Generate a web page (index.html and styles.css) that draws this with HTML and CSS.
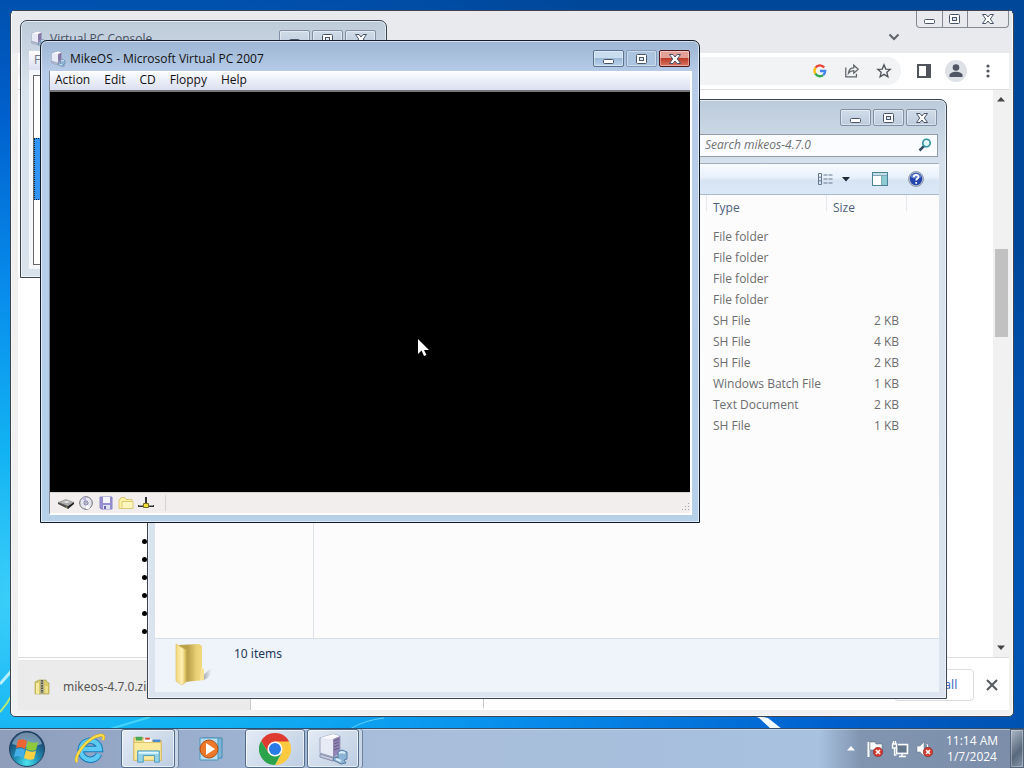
FILE: index.html
```
<!DOCTYPE html>
<html lang="en">
<head>
  <meta charset="UTF-8">
  <title>Desktop</title>
  <link rel="stylesheet" href="styles.css">
</head>
<body>

  <svg class="defs" aria-hidden="true">
    <symbol id="g-min" viewBox="0 0 16 14">
      <rect x="2.500" y="7.500" width="10" height="4" rx="1" fill="#fff" stroke="#4a5468"/>
    </symbol>
    <symbol id="g-max" viewBox="0 0 16 14">
      <rect x="2.500" y="2.500" width="10" height="9" rx="1" fill="#fff" stroke="#4a5468"/>
      <rect x="5.500" y="5.500" width="4" height="3" fill="#dfe8f2" stroke="#4a5468"/>
    </symbol>
    <symbol id="g-close" viewBox="0 0 16 14">
      <path d="M2.500 2.500h3.500L8 5l2-2.500h3.500L10.300 7l3.200 4.500H10L8 9l-2 2.500H2.500L5.700 7z" fill="#fff" stroke="#4a5468"/>
    </symbol>
    <symbol id="vpc" viewBox="0 0 32 32">
      <path d="M3 5l13-4 7 2v17l-7 4-13-4z" fill="#e8eaf5" stroke="#9ba3bd"/>
      <path d="M16 5l7-2v17l-7 4z" fill="#9186b5"/>
      <path d="M3 5l13-4 7 2-7 3z" fill="#fafaff"/>
      <path d="M17 8l5-2M17 11l5-2M17 14l5-2M17 17l5-2" stroke="#625882"/>
      <path d="M3 21l13 4 5-2v3l-5 2-13-4z" fill="#c5cbdc" stroke="#858eaa"/>
      <path d="M21 19l4-2 5 2v7l-3 1 2 3-5 1-8-4 1-3 4 1z" fill="#8db3d4" stroke="#587c9f"/>
      <path d="M22 20l3-1 3 1M19 26l5 2" fill="none" stroke="#d9edfb" stroke-width="2"/>
    </symbol>
    <symbol id="error" viewBox="0 0 10 10">
      <circle cx="5" cy="5" r="4.700" fill="#d63a32" stroke="#8d2522" stroke-width=".6"/>
      <path d="M3 3l4 4M7 3L3 7" stroke="#fff" stroke-width="1.600"/>
    </symbol>
  </svg>

  <main class="desktop">
    <svg class="streaks" viewBox="0 0 1024 728" preserveAspectRatio="none" aria-hidden="true">
      <path d="M0 684Q7 676 14 668" stroke="#b8efff" stroke-width="3" fill="none"/>
      <path d="M0 712Q7 704 12 695" stroke="#b2e878" stroke-width="2" fill="none"/>
      <path d="M750 714l9 4 12 11h11l-14-11z" fill="#f4fbff"/>
      <path d="M350 729q15-9 34-11" stroke="#5fd0ff" stroke-width="1" fill="none"/>
      <path d="M110 729l40-12" stroke="#44d3fa" stroke-width="2" fill="none"/>
    </svg>

    <!-- browser -->
    <section class="window browser">
      <header class="tabstrip">
        <div class="joined-controls">
          <button aria-label="Minimize"><svg><use href="#g-min"/></svg></button>
          <button aria-label="Maximize"><svg><use href="#g-max"/></svg></button>
          <button class="wide" aria-label="Close"><svg><use href="#g-close"/></svg></button>
        </div>
        <button class="tab-search" aria-label="Search tabs"><svg viewBox="0 0 12 8"><path d="M1.500 1.500L6 6l4.500-4.500" fill="none" stroke="#5f6368" stroke-width="2"/></svg></button>
      </header>
      <div class="browser-body">
        <div class="browser-toolbar">
          <div class="omnibox">
            <button aria-label="Google search">
              <svg viewBox="0 0 18 18" fill="none" stroke-width="2.600">
                <path d="M13.700 5A6 6 0 0 0 4 5.300" stroke="#ea4335"/>
                <path d="M4 5.300A6 6 0 0 0 3.800 12" stroke="#fbbc05"/>
                <path d="M3.800 12A6 6 0 0 0 12.600 13.600" stroke="#34a853"/>
                <path d="M12.600 13.600A6 6 0 0 0 14.800 9H9" stroke="#4285f4"/>
              </svg>
            </button>
            <button aria-label="Share">
              <svg viewBox="0 0 18 18" fill="none" stroke="#5f6368" stroke-width="1.400"><path d="M2 5v10.500h12V12M5 11.500c.5-4 3-6 6-6V2.500L16 7l-5 4.500v-3c-3 0-4.500 1-6 3z"/></svg>
            </button>
            <button aria-label="Bookmark">
              <svg viewBox="0 0 18 18" fill="none" stroke="#50545a" stroke-width="1.500"><path d="M9 2l2 4.800 5 .4-3.800 3.300 1.200 5L9 12.800l-4.400 2.700 1.200-5L2 7.200l5-.4z"/></svg>
            </button>
          </div>
          <button aria-label="Side panel"><svg viewBox="0 0 18 18"><rect x="3" y="3" width="12" height="12" fill="#fff" stroke="#50545a" stroke-width="2"/><path d="M11 3h4v12h-4z" fill="#50545a"/></svg></button>
          <button class="avatar" aria-label="Profile"><svg viewBox="0 0 18 18" fill="#4f5563"><circle cx="9" cy="5.500" r="3.300"/><path d="M2.500 15v-2c0-2 3.500-3.300 6.500-3.300s6.500 1.300 6.500 3.300v2z"/></svg></button>
          <button aria-label="Menu"><svg viewBox="0 0 18 18" fill="#50545a"><circle cx="9" cy="4" r="1.600"/><circle cx="9" cy="9" r="1.600"/><circle cx="9" cy="14" r="1.600"/></svg></button>
        </div>
        <div class="page">
          <ul class="page-list">
            <li></li>
            <li></li>
            <li></li>
            <li></li>
            <li></li>
            <li></li>
          </ul>
          <div class="scrollbar">
            <svg viewBox="0 0 8 5"><path d="M4 0l4 4.500H0z" fill="#444"/></svg>
            <div class="track"><div class="thumb"></div></div>
            <svg viewBox="0 0 8 5"><path d="M4 5L0 .5h8z" fill="#444"/></svg>
          </div>
        </div>
        <footer class="downloads">
          <a class="download" href="#">
            <svg viewBox="0 0 16 16">
              <path d="M1 3l4-2h7l1 2 2 1v11H1z" fill="#d9ca69" stroke="#a5973f" stroke-width=".6"/>
              <path d="M2 4h3v11H2z" fill="#f3e99f"/>
              <path d="M6 1h4v14H6z" fill="#b5b08a"/>
              <path d="M8 1v13" stroke="#55584a" stroke-width="2" stroke-dasharray="1.500 1"/>
              <path d="M11 7h3v7h-3z" fill="#eadf8a"/>
            </svg>
            <span>mikeos-4.7.0.zip</span>
          </a>
          <div class="download-gap"></div>
          <button class="show-all">Show all</button>
          <button class="close-bar" aria-label="Close"><svg viewBox="0 0 12 12"><path d="M1 1l10 10M11 1L1 11" stroke="#55595e" stroke-width="2"/></svg></button>
        </footer>
      </div>
    </section>

    <!-- file explorer -->
    <section class="window explorer">
      <header class="titlebar">
        <div class="controls">
          <button aria-label="Minimize"><svg><use href="#g-min"/></svg></button>
          <button aria-label="Maximize"><svg><use href="#g-max"/></svg></button>
          <button aria-label="Close"><svg><use href="#g-close"/></svg></button>
        </div>
      </header>
      <div class="address-row">
        <label class="search">
          <input type="text" placeholder="Search mikeos-4.7.0" aria-label="Search mikeos-4.7.0">
          <svg viewBox="0 0 14 14"><path d="M6 8l-4.500 4.500" stroke="#355064" stroke-width="2.500"/><circle cx="8.500" cy="5" r="3.700" fill="#dff7fb" stroke="#2b91a0" stroke-width="1.600"/></svg>
        </label>
      </div>
      <div class="client">
        <div class="command-bar">
          <button class="view" aria-label="Change your view">
            <svg viewBox="0 0 16 14" fill="none" stroke="#68788c"><path d="M1.500 1.500h3v11h-3zM1 5.200h4M1 8.800h4"/><path d="M6.500 3h4M11.500 3h4M6.500 7h4M11.500 7h4M6.500 11h4M11.500 11h4"/></svg>
          </button>
          <button class="more" aria-label="More options"><svg viewBox="0 0 8 5"><path d="M0 0h8L4 4.500z" fill="#1d2a3d"/></svg></button>
          <button class="preview" aria-label="Show the preview pane">
            <svg viewBox="0 0 16 14"><rect x=".5" y=".5" width="15" height="13" fill="#fff" stroke="#4d8198"/><path d="M1 1h14v2H1z" fill="#c3dde6"/><path d="M10 4h5v9h-5z" fill="#8ccbd2"/><path d="M1 3.500h14M9.500 3v10" stroke="#7fa9b8"/></svg>
          </button>
          <button class="help" aria-label="Get help">
            <svg viewBox="0 0 16 16"><circle cx="8" cy="8" r="7.500" fill="#b3bccc" stroke="#7d8799" stroke-width=".7"/><circle cx="8" cy="8" r="6.200" fill="#2545ac"/><path d="M2.500 6a6 6 0 0 1 11 0Q8 9 2.500 6z" fill="#6683cf"/><path d="M5.700 6.200c0-3 4.800-3 4.800-.3C10.500 7.600 8.200 7.500 8.200 9.500M8.200 11v1.700" fill="none" stroke="#fff" stroke-width="1.700"/></svg>
          </button>
        </div>
        <div class="panes">
          <nav class="nav-pane"></nav>
          <div class="file-pane">
            <table class="files">
              <colgroup><col><col class="type"><col class="size"><col class="rest"></colgroup>
              <thead>
                <tr><th></th><th>Type</th><th>Size</th><th></th></tr>
              </thead>
              <tbody>
                <tr><td></td><td>File folder</td><td></td><td></td></tr>
                <tr><td></td><td>File folder</td><td></td><td></td></tr>
                <tr><td></td><td>File folder</td><td></td><td></td></tr>
                <tr><td></td><td>File folder</td><td></td><td></td></tr>
                <tr><td></td><td>SH File</td><td>2 KB</td><td></td></tr>
                <tr><td></td><td>SH File</td><td>4 KB</td><td></td></tr>
                <tr><td></td><td>SH File</td><td>2 KB</td><td></td></tr>
                <tr><td></td><td>Windows Batch File</td><td>1 KB</td><td></td></tr>
                <tr><td></td><td>Text Document</td><td>2 KB</td><td></td></tr>
                <tr><td></td><td>SH File</td><td>1 KB</td><td></td></tr>
              </tbody>
            </table>
          </div>
        </div>
        <footer class="details">
          <svg viewBox="0 0 40 44">
            <defs>
              <linearGradient id="fold"><stop offset="0" stop-color="#bba44a"/><stop offset=".35" stop-color="#b9a04a"/><stop offset=".7" stop-color="#ead077"/><stop offset="1" stop-color="#f3dc83"/></linearGradient>
              <linearGradient id="flap"><stop offset="0" stop-color="#f0d77d"/><stop offset=".6" stop-color="#fff0b4"/><stop offset="1" stop-color="#d6b94f"/></linearGradient>
              <linearGradient id="shade"><stop offset="0" stop-color="#747b85"/><stop offset="1" stop-color="#eff3f8"/></linearGradient>
            </defs>
            <path d="M25 38l13-12q2 8-7 12z" fill="url(#shade)"/>
            <path d="M6 3l20-1 3 2v22l2 2v10L12 40z" fill="url(#fold)"/>
            <path d="M3 2l10 6v32l-4 3-6-4z" fill="url(#flap)" stroke="#d8bd5b" stroke-width=".6"/>
            <path d="M28 25l3 4v9h-4z" fill="#f6e294"/>
          </svg>
          <span>10 items</span>
        </footer>
      </div>
    </section>

    <!-- virtual pc console -->
    <section class="window console">
      <header class="titlebar">
        <svg class="app-icon"><use href="#vpc"/></svg>
        <span class="title">Virtual PC Console</span>
        <div class="controls">
          <button aria-label="Minimize"><svg><use href="#g-min"/></svg></button>
          <button aria-label="Maximize"><svg><use href="#g-max"/></svg></button>
          <button aria-label="Close"><svg><use href="#g-close"/></svg></button>
        </div>
      </header>
      <div class="client">
        <nav class="menu"><button>File</button></nav>
        <div class="machines"><div class="machine"></div></div>
      </div>
    </section>

    <!-- running machine -->
    <section class="window machine-window">
      <header class="titlebar">
        <svg class="app-icon"><use href="#vpc"/></svg>
        <span class="title">MikeOS - Microsoft Virtual PC 2007</span>
        <div class="controls">
          <button aria-label="Minimize"><svg><use href="#g-min"/></svg></button>
          <button class="flat" aria-label="Maximize"><svg><use href="#g-max"/></svg></button>
          <button class="red" aria-label="Close"><svg><use href="#g-close"/></svg></button>
        </div>
      </header>
      <div class="client">
        <nav class="menu">
          <button>Action</button>
          <button>Edit</button>
          <button>CD</button>
          <button>Floppy</button>
          <button>Help</button>
        </nav>
        <div class="screen">
          <svg viewBox="0 0 12 19"><path d="M1 1v15l3.500-3.500L7 18l2.500-1-2.500-5h5z" fill="#fff"/></svg>
        </div>
        <footer class="statusbar">
          <svg viewBox="0 0 16 14"><path d="M0 6l8-3 8 3-6 4z" fill="#a9a9a9"/><path d="M0 6l10 4v3L0 8z" fill="#4b4b4b"/><path d="M10 10l6-4v2l-6 5z" fill="#222"/><path d="M4 6l5-1 3 1-3 1z" fill="#e8e8e8"/><path d="M8 11l1 .4" stroke="#a4da4d"/></svg>
          <svg viewBox="0 0 14 14"><circle cx="7" cy="7" r="6.300" fill="#e5e5ee" stroke="#6d6d78"/><path d="M7 7L3 2a6 6 0 0 1 4-1z" fill="#b9b7de"/><path d="M7 7l4 5a6 6 0 0 1-4 1z" fill="#fff"/><circle cx="7" cy="7" r="2" fill="#fff" stroke="#7772a8"/><circle cx="7" cy="7" r=".7" fill="#444"/></svg>
          <svg viewBox="0 0 14 14"><path d="M1 1h12v12H2l-1-1z" fill="#9690d2" stroke="#8a84c6"/><path d="M4 1h7v6H4z" fill="#f5f5ff"/><path d="M4 9h7v4H4z" fill="#e2e2ef"/><path d="M5 10h2v3H5z" fill="#6861a8"/></svg>
          <svg viewBox="0 0 16 14"><path d="M1 12.500v-9h1l1-2h4l1 2h6v9z" fill="#fff3a6" stroke="#dcc878"/><path d="M4 12.500v-7h11v7z" fill="#fff7bd" stroke="#dcc878"/></svg>
          <svg viewBox="0 0 16 14"><path d="M8 1v7M0 10h16" stroke="#333" stroke-width="2"/><path d="M1 9.500h14" stroke="#999"/><path d="M5.500 7.500h5v4h-5z" fill="#f0df39" stroke="#776f20"/></svg>
          <span class="divider"></span>
          <svg class="grip" viewBox="0 0 10 10" fill="#aaa2a8"><path d="M8 1h1v1H8zM5 4h1v1H5zM8 4h1v1H8zM2 7h1v1H2zM5 7h1v1H5zM8 7h1v1H8z"/></svg>
        </footer>
      </div>
    </section>
  </main>

  <footer class="taskbar">
    <button class="start" aria-label="Start">
      <svg viewBox="0 0 38 38">
        <defs>
          <radialGradient id="orb" cx=".5" cy=".9" r=".8"><stop offset="0" stop-color="#4ce5ee"/><stop offset=".4" stop-color="#2294b9"/><stop offset="1" stop-color="#173c67"/></radialGradient>
        </defs>
        <circle cx="19" cy="19" r="17.500" fill="url(#orb)" stroke="#24415f"/>
        <path d="M4 14a15.500 15.500 0 0 1 30 0q-14 6-30 0z" fill="#c9dbe8" opacity=".5"/>
        <path d="M10 10q5-2 9 1l-2 8q-4-3-9-1z" fill="#ed6530"/>
        <path d="M20 11q5 3 10 1l-2 8q-5 2-10-1z" fill="#8fc83b"/>
        <path d="M8 19q5-2 9 1l-2 8q-4-3-9-1z" fill="#43aee8"/>
        <path d="M18 20q5 3 10 1l-2 8q-5 2-10-1z" fill="#fdd043"/>
      </svg>
    </button>
    <button class="task ie" aria-label="Internet Explorer">
      <svg viewBox="0 0 32 32" fill="none">
        <path d="M25 21A9.500 9.500 0 1 1 25.700 16H9" stroke="#1879b9" stroke-width="6.500"/>
        <path d="M25 21A9.500 9.500 0 1 1 25.700 16H9" stroke="#5ccaf2" stroke-width="4.500"/>
        <path d="M3 29C-1 24 13 4 27 2q4 0 2 5" stroke="#d7a51c" stroke-width="3"/>
        <path d="M3 29C-1 24 13 4 27 2q4 0 2 5" stroke="#ffe04c" stroke-width="2"/>
      </svg>
    </button>
    <button class="task open stacked folder" aria-label="Windows Explorer">
      <svg viewBox="0 0 34 32">
        <path d="M2 28V4h10l2 3h17v21z" fill="#f8e498" stroke="#c6a853"/>
        <path d="M4 3h7v4H4z" fill="#4aa955"/><path d="M13 5h8v4h-8z" fill="#fff"/><path d="M14 4h5v2h-5z" fill="#d8473a"/><path d="M22 6h8v3h-8z" fill="#478ad1"/>
        <path d="M2 9h29v19H2z" fill="#fbea9c" stroke="#d8bd65"/>
        <path d="M6 30V18h23v12h-5v-7H12v7z" fill="#94d4e9" stroke="#4a99b9"/>
        <path d="M7 20h21" stroke="#dff8ff" stroke-width="2"/>
      </svg>
    </button>
    <button class="task player" aria-label="Windows Media Player">
      <svg viewBox="0 0 28 28">
        <path d="M6 3h19v20H6z" fill="#78b7da" stroke="#478baf"/><path d="M3 3h18v22H3z" fill="#b5dff3" stroke="#4e94bb"/>
        <circle cx="12" cy="14" r="9" fill="#ec7929" stroke="#b34f14"/><path d="M9 8l9 6-9 6z" fill="#fff"/>
      </svg>
    </button>
    <button class="task open chrome" aria-label="Google Chrome">
      <svg viewBox="0 0 32 32">
        <path d="M16 16V0h1L29.860 8A16 16 0 0 1 16 32l7-12z" fill="#fcca3f"/>
        <path d="M16 8.500H29.500L29.860 8A16 16 0 0 0 2.140 8L9.500 20z" fill="#de3b30"/>
        <path d="M2.140 8A16 16 0 0 0 16 32l6.500-12L16 16l-6.500 4z" fill="#2ba24c"/>
        <circle cx="16" cy="16" r="7.600" fill="#fff"/><circle cx="16" cy="16" r="6" fill="#287ae6"/>
      </svg>
    </button>
    <button class="task open stacked vpc" aria-label="Virtual PC"><svg><use href="#vpc"/></svg></button>

    <div class="tray">
      <button aria-label="Show hidden icons"><svg viewBox="0 0 8 5"><path d="M4 0l4 4.500H0z" fill="#fff"/></svg></button>
      <button aria-label="Action Center"><svg viewBox="0 0 18 18"><path d="M2.500 2v15" stroke="#fff" stroke-width="2"/><path d="M4 2h5l1 2h6v8h-6l-1-2H4z" fill="#fff" stroke="#596579" stroke-width=".5"/><use href="#error" x="7" y="7" width="10" height="10"/></svg></button>
      <button aria-label="Network"><svg viewBox="0 0 18 18" fill="none" stroke="#fff"><path d="M7 4.500h9.500v9H5.500v-5M8 16.500h7M11 14v2" stroke-width="1.500"/><path d="M7 6h8v6H7z" fill="#65758b" stroke="none"/><path d="M1.500 4h4v4h-4zM2.500 1v3M4.500 1v3M3.500 8v7h2" stroke-width="1.300"/></svg></button>
      <button aria-label="Volume"><svg viewBox="0 0 18 18"><path d="M1 6h3l4-4v14l-4-4H1z" fill="#fff" stroke="#6b7687" stroke-width=".5"/><path d="M11 4q2 4 0 8" stroke="#fff" fill="none"/><use href="#error" x="7" y="7" width="10" height="10"/></svg></button>
    </div>
    <time class="clock"><span>11:14 AM</span><span>1/7/2024</span></time>
    <button class="show-desktop" aria-label="Show desktop"></button>
  </footer>

</body>
</html>
```
FILE: styles.css
```
* {
  box-sizing: border-box;
}

body {
  margin: 0;
  height: 100vh;
  display: flex;
  flex-direction: column;
  overflow: hidden;
  font-family: "Open Sans", "Noto Sans", sans-serif;
  font-size: 12px;
  line-height: 16px;
  color: #111;
  background: radial-gradient(ellipse 112% 88% at 4% 78%, #3ed0fa 0, #12b3f3 22%, #078cec 46%, #005fcc 72%, #00479a 100%);
}

button {
  display: flex;
  align-items: center;
  justify-content: center;
  padding: 0;
  border: 0;
  background: none;
  font: inherit;
  color: inherit;
}

svg {
  display: block;
  flex: none;
}

.defs {
  position: absolute;
  width: 0;
  height: 0;
}

.desktop {
  flex: 1;
  position: relative;
  min-height: 0;
}

.streaks {
  width: 100%;
  height: 100%;
}

/* windows */
.window {
  position: absolute;
  display: flex;
  flex-direction: column;
  border: 1px solid #3a4452;
  border-radius: 7px 7px 0 0;
  box-shadow: inset 0 0 0 1px rgba(255, 255, 255, 0.6);
}

.titlebar {
  display: flex;
  align-items: center;
  height: 30px;
  padding: 5px 2px 0 1px;
}

.app-icon {
  width: 16px;
  height: 16px;
  margin-right: 4px;
}

.controls {
  display: flex;
  gap: 2px;
  margin-left: auto;
}

.controls button {
  width: 31px;
  height: 17px;
  border: 1px solid #8290a5;
  border-radius: 2px;
  background: linear-gradient(#d1dce8, #bdcbdc);
  box-shadow: inset 0 0 0 1px rgba(255, 255, 255, 0.4);
}

.controls svg,
.joined-controls svg {
  width: 16px;
  height: 14px;
}

.client {
  flex: 1;
  display: flex;
  flex-direction: column;
  min-height: 0;
}

.menu {
  display: flex;
  gap: 14px;
  height: 19px;
  padding: 0 0 1px 5px;
  background: linear-gradient(#fff, #f2f4fb 30%, #dcdff0);
}

/* browser */
.browser {
  inset: 10px 10px 11px 10px;
  padding: 0 4px 6px 7px;
  background: #f0f0f1;
  border-radius: 5px;
}

.tabstrip {
  height: 42px;
  background: #e8eaed;
  display: flex;
  flex-direction: column;
  align-items: flex-end;
}

.browser .tabstrip {
  margin: 0 -3px 0 -6px;
}

.joined-controls {
  display: flex;
  margin-right: 3px;
  border: 1px solid #858a92;
  border-top: 0;
  border-radius: 0 0 4px 4px;
}

.joined-controls button {
  width: 25px;
  height: 16px;
}

.joined-controls button + button {
  border-left: 1px solid #858a92;
}

.joined-controls .wide {
  width: 41px;
}

.tab-search {
  width: 20px;
  height: 18px;
  margin-right: 108px;
}

.tab-search svg {
  width: 12px;
  height: 8px;
}

.browser-body {
  flex: 1;
  min-height: 0;
  display: flex;
  flex-direction: column;
  background: #fff;
}

.browser-toolbar {
  display: flex;
  align-items: center;
  gap: 10px;
  height: 37px;
  padding-right: 10px;
  border-bottom: 1px solid #dadce0;
}

.browser-toolbar button {
  width: 22px;
  height: 22px;
}

.browser-toolbar svg {
  width: 18px;
  height: 18px;
}

.omnibox {
  flex: 1;
  display: flex;
  align-items: center;
  justify-content: flex-end;
  gap: 10px;
  height: 28px;
  margin-right: 2px;
  padding-right: 6px;
  border-radius: 14px;
  background: #f1f3f4;
}

.browser-toolbar .omnibox svg {
  width: 16px;
  height: 16px;
}

.browser-toolbar .avatar {
  border-radius: 50%;
  background: #dee1e6;
}

.page {
  flex: 1;
  min-height: 0;
  display: flex;
  align-items: flex-end;
  justify-content: space-between;
}

.page-list {
  margin: 0;
  padding: 0 0 17px 140px;
  font: 16px/18px "Liberation Serif", serif;
  color: #000;
}

.page-list li {
  height: 18px;
}

.scrollbar {
  width: 16px;
  height: 100%;
  padding: 7px 1px;
  display: flex;
  flex-direction: column;
  align-items: center;
  background: #f1f1f1;
}

.scrollbar svg {
  width: 8px;
  height: 5px;
}

.track {
  flex: 1;
  width: 13px;
  padding-top: 147px;
}

.thumb {
  height: 88px;
  background: #c1c1c1;
}

.downloads {
  display: flex;
  align-items: center;
  height: 53px;
  padding: 2px 9px 0 0;
  border-top: 1px solid #dadce0;
}

.download {
  width: 233px;
  height: 100%;
  display: flex;
  align-items: center;
  gap: 13px;
  padding: 4px 0 0 16px;
  border-right: 1px solid #c8c8c8;
  background: #ebebeb;
  color: #555;
  font-family: "Noto Sans", sans-serif;
  text-decoration: none;
}

.download svg {
  width: 16px;
  height: 16px;
}

.download-gap {
  width: 233px;
  height: 46px;
  border-right: 1px solid #c8c8c8;
}

.show-all {
  width: 80px;
  height: 32px;
  margin-left: auto;
  border: 1px solid #dadce0;
  border-radius: 4px;
  color: #3b69bd;
  font-family: "Noto Sans", sans-serif;
}

.close-bar {
  width: 16px;
  height: 16px;
  margin-left: 10px;
}

.close-bar svg {
  width: 12px;
  height: 12px;
}

/* explorer */
.explorer {
  inset: 99px 77px 29px 147px;
  padding: 0 7px 6px;
  background: linear-gradient(#bccbdb, #d6e1ec 64px, #dbe4ef);
}

.address-row {
  display: flex;
  justify-content: flex-end;
  padding: 4px 1px 6px 0;
}

.search {
  display: flex;
  align-items: center;
  width: 248px;
  height: 23px;
  padding: 0 5px 2px 14px;
  border: 1px solid #929dab;
  background: #fafcff;
}

.search input {
  flex: 1;
  min-width: 0;
  border: 0;
  padding: 0;
  outline: 0;
  background: none;
  font: italic 12px/16px "Open Sans", sans-serif;
}

.search input::placeholder {
  color: #707070;
}

.search svg {
  width: 14px;
  height: 14px;
}

.explorer .client {
  background: #fcfcfd;
}

.command-bar {
  display: flex;
  align-items: center;
  justify-content: flex-end;
  height: 32px;
  padding-right: 15px;
  border-top: 1px solid #9fb0c2;
  border-bottom: 1px solid #a9bacd;
  background: linear-gradient(#fafcff, #e7f0fb 45%, #d6e4f4 55%, #dce8f6);
}

.view svg,
.preview svg,
.help svg {
  width: 16px;
  height: 16px;
}

.more {
  margin: 0 22px 0 9px;
}

.more svg {
  width: 8px;
  height: 5px;
}

.help {
  margin-left: 20px;
}

.panes {
  flex: 1;
  min-height: 0;
  display: flex;
}

.nav-pane {
  width: 159px;
  border-right: 1px solid #dfe3ea;
}

.file-pane {
  flex: 1;
}

.files {
  width: 100%;
  table-layout: fixed;
  border-collapse: collapse;
  color: #6d6d6d;
}

.files .type {
  width: 120px;
}

.files .size {
  width: 80px;
}

.files .rest {
  width: 32px;
}

.files th {
  height: 31px;
  padding: 5px 6px 0;
  vertical-align: top;
  text-align: left;
  font-weight: normal;
  color: #4c607a;
  background: linear-gradient(to left, #e3e8ee 1px, transparent 1px) 0 0 / 100% 16px no-repeat;
}

.files th:last-child {
  background: none;
}

.files td {
  height: 21px;
  padding: 0 8px 0 6px;
  white-space: nowrap;
}

.files td:nth-child(3) {
  text-align: right;
}

.details {
  display: flex;
  gap: 21px;
  height: 54px;
  padding: 3px 18px;
  border-top: 1px solid #d6dee6;
  background: #eff3fa;
  color: #1e395b;
  font-family: "Noto Sans", sans-serif;
}

.details svg {
  width: 40px;
  height: 44px;
}

.details span {
  padding-top: 4px;
}

/* console */
.console {
  left: 20px;
  top: 20px;
  width: 367px;
  height: 258px;
  padding: 0 8px 8px;
  background: linear-gradient(#bdcad8, #d8e2ec 64px, #dae3ec);
}

.console .title {
  color: #465263;
}

.console .client {
  padding-bottom: 4px;
  background: #f4f7fb;
}

.console .menu {
  color: #737983;
}

.machines {
  flex: 1;
  margin: 5px 4px 0;
  padding-top: 62px;
  border: 1px solid #666;
  background: #fff;
}

.machine {
  height: 62px;
  border: 1px dotted #14243a;
  background: #3394f7;
}

/* running machine */
.machine-window {
  left: 40px;
  top: 40px;
  width: 660px;
  padding: 0 7px 7px 8px;
  border-color: #111a28;
  background: linear-gradient(#9db6d3, #b7cce8 32px, #b5d0e8);
}

.machine-window .controls button {
  border-color: #5a7390;
  background: linear-gradient(#c9ddf1 48%, #9db9d8 50%, #b8d3ec);
}

.machine-window .controls .flat {
  border-color: #839ab9;
  background: #abc5e1;
}

.machine-window .controls .red {
  border-color: #51171d;
  background: linear-gradient(#e4a198 48%, #bd3b29 50%, #d77561);
}

.machine-window .client {
  border-left: 1px solid #7e8794;
  border-right: 2px solid #fff;
  border-bottom: 2px solid #fff;
}

.screen {
  height: 402px;
  padding: 246px 0 0 367px;
  border-top: 2px solid #777;
  background: #000;
}

.screen svg {
  width: 12px;
  height: 19px;
}

.statusbar {
  display: flex;
  align-items: center;
  gap: 4px;
  height: 21px;
  padding-left: 8px;
  border-top: 1px solid #d9d4d4;
  background: #f3eeee;
}

.statusbar svg {
  width: 16px;
  height: 14px;
}

.divider {
  height: 16px;
  margin-left: 7px;
  border-left: 1px solid #d8d1d1;
}

.statusbar .grip {
  width: 10px;
  height: 10px;
  margin: 7px 0 0 auto;
}

/* taskbar */
.taskbar {
  display: flex;
  align-items: center;
  height: 40px;
  border-top: 1px solid #304d6b;
  background: linear-gradient(to right, #8d9dba, #9bafcf 20%, #a8bdd9 36%, #a7c1df 80%, #8195b0 84%, #7b8da9);
  box-shadow: inset 0 1px 0 rgba(255, 255, 255, 0.4);
}

.start {
  width: 38px;
  margin: 0 29px 0 8px;
}

.start svg {
  width: 38px;
  height: 38px;
}

.task {
  height: 39px;
}

.task svg {
  width: 32px;
  height: 32px;
}

.open {
  border: 1px solid #536d8c;
  border-radius: 3px;
  background: linear-gradient(135deg, #e3ebf5, #bdcde2);
  box-shadow: inset 0 0 0 1px rgba(255, 255, 255, 0.6);
}

.ie {
  width: 30px;
}

.folder {
  width: 54px;
  margin-left: 16px;
}

.stacked {
  box-shadow: inset 0 0 0 1px rgba(255, 255, 255, 0.6), 3px 0 0 #c7d5e6, 4px 0 0 #6d84a1;
}

.player {
  width: 30px;
  margin: 0 19px 0 21px;
}

.player svg {
  width: 28px;
  height: 28px;
}

.chrome {
  width: 60px;
}

.vpc {
  width: 52px;
  margin-left: 2px;
}

.tray {
  display: flex;
  align-items: center;
  gap: 7px;
  margin-left: auto;
}

.tray svg {
  width: 18px;
  height: 18px;
}

.tray button:first-child svg {
  width: 8px;
  height: 5px;
  margin-right: 4px;
}

.clock {
  width: 76px;
  display: flex;
  flex-direction: column;
  align-items: center;
  color: #fff;
}

.show-desktop {
  width: 14px;
  height: 39px;
  border: 1px solid #56657a;
  background: linear-gradient(135deg, #acb8c7, #58687d 60%, #8797ab);
  box-shadow: inset 0 0 0 1px rgba(255, 255, 255, 0.3);
}
```
